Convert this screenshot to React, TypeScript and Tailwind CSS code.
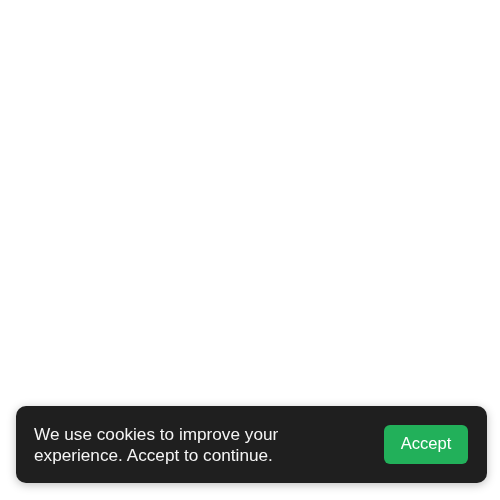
import React from "react";

export default function App() {
  return (
    <div className="min-h-[500px] bg-white" style={{ fontFamily: '"Liberation Sans", Arial, sans-serif' }}>
      <div className="fixed left-4 bottom-[17px] w-[471px] h-[77px] rounded-[10px] bg-[#1f1f1f] shadow-[0_2px_10px_rgba(0,0,0,0.25)] flex items-center justify-between pl-[18px] pr-[19px]">
        <p className="text-[#f5f5f5] text-[17.2px] leading-[21px] max-w-[290px] m-0">
          We use cookies to improve your experience. Accept to continue.
        </p>
        <button className="h-[39px] w-[84px] rounded-[6px] bg-[#22b05a] text-white text-[16.6px] leading-none flex items-center justify-center">
          Accept
        </button>
      </div>
    </div>
  );
}
